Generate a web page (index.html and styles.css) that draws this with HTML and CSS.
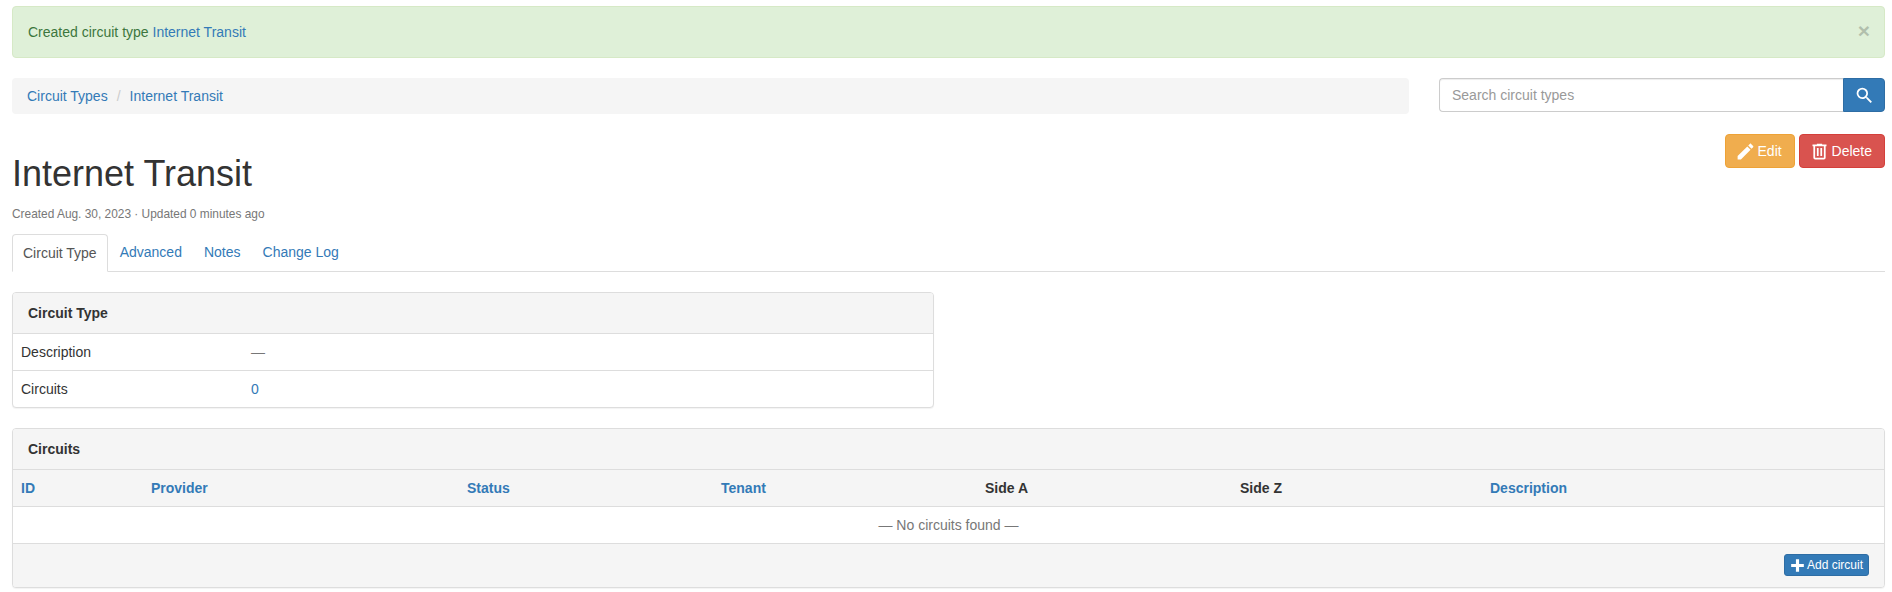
FILE: index.html
```html
<!DOCTYPE html>
<html lang="en">
<head>
<meta charset="utf-8">
<title>Internet Transit</title>
<link rel="stylesheet" href="styles.css">
</head>
<body>
<div class="page">
  <div class="alert">
    <span>Created circuit type <a href="#">Internet Transit</a></span>
    <span class="close">×</span>
  </div>
  <div class="topbar">
    <ol class="breadcrumb">
      <li><a href="#">Circuit Types</a></li>
      <li class="sep">/</li>
      <li><a href="#">Internet Transit</a></li>
    </ol>
    <form class="search">
      <input class="search-input" type="text" placeholder="Search circuit types">
      <button class="search-btn" type="button" aria-label="Search">
        <svg class="icon-search" viewBox="0 0 24 24"><path d="M9.5,3A6.5,6.5 0 0,1 16,9.5C16,11.11 15.41,12.59 14.44,13.73L14.71,14H15.5L20.5,19L19,20.5L14,15.5V14.71L13.73,14.44C12.59,15.41 11.11,16 9.5,16A6.5,6.5 0 0,1 3,9.5A6.5,6.5 0 0,1 9.5,3M9.5,5C7,5 5,7 5,9.5C5,12 7,14 9.5,14C12,14 14,12 14,9.5C14,7 12,5 9.5,5Z"/></svg>
      </button>
    </form>
  </div>
  <div class="actions">
    <a class="btn btn-warning" href="#">
      <svg class="icon" viewBox="0 0 24 24"><path d="M20.71,7.04C21.1,6.65 21.1,6 20.71,5.63L18.37,3.29C18,2.9 17.35,2.9 16.96,3.29L15.12,5.12L18.87,8.87M3,17.25V21H6.75L17.81,9.93L14.06,6.18L3,17.25Z"/></svg>
      Edit
    </a>
    <a class="btn btn-danger" href="#">
      <svg class="icon" viewBox="0 0 24 24"><path d="M9,3V4H4V6H5V19A2,2 0 0,0 7,21H17A2,2 0 0,0 19,19V6H20V4H15V3H9M7,6H17V19H7V6M9,8V17H11V8H9M13,8V17H15V8H13Z"/></svg>
      Delete
    </a>
  </div>
  <h1 class="title">Internet Transit</h1>
  <p class="meta">Created Aug. 30, 2023 · Updated 0 minutes ago</p>
  <ul class="tabs">
    <li class="tab active"><a href="#">Circuit Type</a></li>
    <li class="tab"><a href="#">Advanced</a></li>
    <li class="tab"><a href="#">Notes</a></li>
    <li class="tab"><a href="#">Change Log</a></li>
  </ul>
  <section class="panel panel-narrow">
    <div class="panel-heading">Circuit Type</div>
    <table class="attrs">
      <tr><td class="attr-name">Description</td><td class="muted">—</td></tr>
      <tr><td class="attr-name">Circuits</td><td><a href="#">0</a></td></tr>
    </table>
  </section>
  <section class="panel">
    <div class="panel-heading">Circuits</div>
    <table class="list">
      <colgroup>
        <col class="c-id"><col class="c-provider"><col class="c-status"><col class="c-tenant"><col class="c-a"><col class="c-z"><col>
      </colgroup>
      <thead>
        <tr>
          <th><a href="#">ID</a></th>
          <th><a href="#">Provider</a></th>
          <th><a href="#">Status</a></th>
          <th><a href="#">Tenant</a></th>
          <th>Side A</th>
          <th>Side Z</th>
          <th><a href="#">Description</a></th>
        </tr>
      </thead>
      <tbody>
        <tr><td class="empty" colspan="7">— No circuits found —</td></tr>
      </tbody>
    </table>
    <div class="panel-footer">
      <a class="btn btn-primary btn-xs" href="#">
        <svg class="icon" viewBox="0 0 24 24"><path d="M20 14H14V20H10V14H4V10H10V4H14V10H20V14Z"/></svg>
        Add circuit
      </a>
    </div>
  </section>
</div>
</body>
</html>
```
FILE: styles.css
```css
* { box-sizing: border-box; }
html, body { margin: 0; padding: 0; }
body {
  font-family: "Liberation Sans", Arial, sans-serif;
  font-size: 14px;
  line-height: 20px;
  color: #333;
  background: #fff;
}
a { color: #337ab7; text-decoration: none; }
.page { padding: 6px 7px 0 12px; }

.alert {
  display: flex;
  justify-content: space-between;
  height: 52px;
  padding: 15px;
  background: #dff0d8;
  border: 1px solid #d6e9c6;
  border-radius: 4px;
  color: #3c763d;
}
.close {
  font-size: 21px;
  font-weight: 700;
  line-height: 20px;
  color: #000;
  opacity: .2;
  margin-top: -1px;
  margin-right: -1px;
}

.topbar {
  display: flex;
  align-items: flex-start;
  justify-content: space-between;
  margin-top: 20px;
}
.breadcrumb {
  display: flex;
  width: 1397px;
  height: 36px;
  margin: 0;
  padding: 8px 15px;
  list-style: none;
  background: #f5f5f5;
  border-radius: 4px;
}
.sep { color: #ccc; padding: 0 9px; }
.search { display: flex; width: 446px; height: 34px; }
.search-input {
  flex: 1;
  min-width: 0;
  height: 34px;
  padding: 6px 12px;
  font: inherit;
  color: #555;
  background: #fff;
  border: 1px solid #ccc;
  border-right: 0;
  border-radius: 4px 0 0 4px;
  box-shadow: inset 0 1px 1px rgba(0,0,0,.075);
}
.search-input::placeholder { color: #999; opacity: 1; }
.search-btn {
  display: flex;
  align-items: center;
  justify-content: center;
  width: 42px;
  height: 34px;
  padding: 0;
  background: #337ab7;
  border: 1px solid #2e6da4;
  border-radius: 0 4px 4px 0;
  color: #fff;
}
.icon-search { width: 21px; height: 21px; fill: currentColor; }
.icon {
  display: inline-block;
  width: 21px;
  height: 21px;
  margin: -3px -2px -3px -3px;
  fill: currentColor;
  vertical-align: -3px;
}

.actions {
  display: flex;
  justify-content: flex-end;
  gap: 4px;
  margin-top: 20px;
  height: 34px;
}
.btn {
  display: inline-block;
  padding: 6px 12px;
  border: 1px solid transparent;
  border-radius: 4px;
  color: #fff;
  white-space: nowrap;
}
.btn-warning { background: #f0ad4e; border-color: #eea236; }
.btn-danger { background: #d9534f; border-color: #d43f3a; }
.btn-primary { background: #337ab7; border-color: #2e6da4; }
.btn-xs { height: 22px; padding: 1px 5px; font-size: 12px; line-height: 18px; border-radius: 3px; }
.btn-xs .icon { width: 19px; height: 19px; margin: -3px -3px -3px -2px; }

.title {
  margin: -14px 0 0;
  font-size: 36px;
  font-weight: 500;
  line-height: 40px;
}
.meta {
  margin: 12px 0 0;
  font-size: 11.9px;
  line-height: 17px;
  color: #777;
}
.tabs {
  display: flex;
  gap: 2px;
  height: 38px;
  margin: 11px 0 20px;
  padding: 0;
  list-style: none;
  border-bottom: 1px solid #ddd;
}
.tab { height: 38px; border-radius: 4px 4px 0 0; }
.tab a { display: block; padding: 8px 10px; }
.tab.active { background: #fff; border: 1px solid #ddd; border-bottom-color: #fff; }
.tab.active a { color: #555; }

.panel {
  margin-bottom: 20px;
  background: #fff;
  border: 1px solid #ddd;
  border-radius: 4px;
  box-shadow: 0 1px 1px rgba(0,0,0,.05);
  overflow: hidden;
}
.panel-narrow { width: 922px; }
.panel-heading {
  height: 41px;
  padding: 10px 15px;
  background: #f5f5f5;
  border-bottom: 1px solid #ddd;
  font-weight: 700;
}
table { width: 100%; border-collapse: collapse; }
td, th { padding: 8px; line-height: 20px; text-align: left; }
.attrs tr + tr td { border-top: 1px solid #ddd; }
.attr-name { width: 230px; }
.muted { color: #777; }
.list { table-layout: fixed; }
.list th { background: #f5f5f5; font-weight: 700; padding: 8px; height: 36px; }
.list td { border-top: 1px solid #ddd; }
.c-id { width: 130px; }
.c-provider { width: 316px; }
.c-status { width: 254px; }
.c-tenant { width: 264px; }
.c-a { width: 255px; }
.c-z { width: 250px; }
.empty { text-align: center; color: #777; padding: 8px 8px 7px; height: 36px; }
.panel-footer {
  display: flex;
  justify-content: flex-end;
  height: 44px;
  padding: 10px 15px;
  background: #f5f5f5;
  border-top: 1px solid #ddd;
}
```
